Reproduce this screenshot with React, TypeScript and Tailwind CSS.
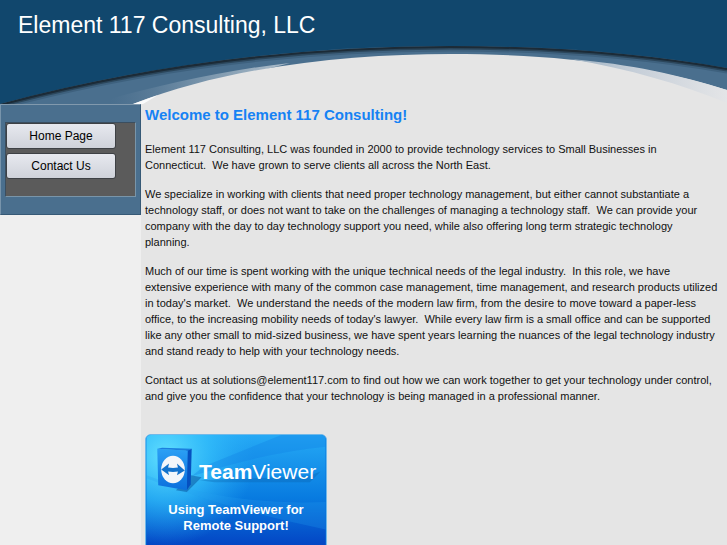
import React from 'react';

const navItems = [
  { label: 'Home Page', href: '#home' },
  { label: 'Contact Us', href: '#contact' },
];

const paragraphs = [
  `Element 117 Consulting, LLC was founded in 2000 to provide technology services to Small Businesses in
Connecticut.\u00a0 We have grown to serve clients all across the North East.`,
  `We specialize in working with clients that need proper technology management, but either cannot substantiate a
technology staff, or does not want to take on the challenges of managing a technology staff.\u00a0 We can provide your
company with the day to day technology support you need, while also offering long term strategic technology
planning.`,
  `Much of our time is spent working with the unique technical needs of the legal industry.\u00a0 In this role, we have
extensive experience with many of the common case management, time management, and research products utilized
in today's market.\u00a0 We understand the needs of the modern law firm, from the desire to move toward a paper-less
office, to the increasing mobility needs of today's lawyer.\u00a0 While every law firm is a small office and can be supported
like any other small to mid-sized business, we have spent years learning the nuances of the legal technology industry
and stand ready to help with your technology needs.`,
  `Contact us at solutions@element117.com to find out how we can work together to get your technology under control,
and give you the confidence that your technology is being managed in a professional manner.`,
];

function Swoosh() {
  return (
    <svg
      className="absolute inset-0 h-full w-full"
      viewBox="0 0 727 104"
      preserveAspectRatio="none"
      aria-hidden="true"
    >
      <defs>
        <linearGradient id="left-glow" x1="110" y1="0" x2="280" y2="0" gradientUnits="userSpaceOnUse">
          <stop offset="0" stopColor="#5f7f9b" stopOpacity="0" />
          <stop offset="0.5" stopColor="#7390a8" />
          <stop offset="1" stopColor="#a9bac8" />
        </linearGradient>
        <linearGradient id="right-glow" x1="570" y1="0" x2="727" y2="0" gradientUnits="userSpaceOnUse">
          <stop offset="0" stopColor="#9db1c2" />
          <stop offset="0.4" stopColor="#c5ced8" />
          <stop offset="1" stopColor="#e4e5e7" />
        </linearGradient>
      </defs>
      <path d="M0 104C150 64 300 46 450 46C550 46 640 53 727 68V104Z" fill="#4a6f8e" />
      <path d="M0 108C150 68 300 50 450 50C550 50 640 57 727 72" fill="none" stroke="#3e617e" strokeWidth="3" />
      <path d="M0 106C150 66 300 48 450 48C550 48 640 55 727 70" fill="none" stroke="#2b465b" strokeWidth="3" />
      <path d="M0 105C150 65 300 47 450 47C550 47 640 54 727 69" fill="none" stroke="#1c2b37" strokeWidth="2" />
      <path d="M110 99C160 85 225 70 290 63L240 76L133 104H110Z" fill="url(#left-glow)" />
      <path d="M133 104C230 66 350 54 450 54C560 54 650 66 727 90V104Z" fill="#e5e5e5" />
      <path d="M570 59C630 64 680 75 727 90V103C680 84 630 69 570 59Z" fill="url(#right-glow)" />
      <path d="M133 104L158 95L143 104Z" fill="#fafbfc" />
    </svg>
  );
}

function TeamViewerBadge() {
  return (
    <a
      href="#support"
      className="relative block h-[128px] w-[182px] overflow-hidden rounded-md border border-[#71b9e9] bg-[#0870dc]"
    >
      <svg className="absolute inset-0 h-full w-full" viewBox="0 0 182 128" aria-hidden="true">
        <defs>
          <linearGradient id="badge-base" x1="0" y1="0" x2="0" y2="1">
            <stop offset="0" stopColor="#25a9f5" />
            <stop offset="0.5" stopColor="#087be0" />
            <stop offset="0.85" stopColor="#0449c6" />
            <stop offset="1" stopColor="#033eb9" />
          </linearGradient>
          <radialGradient id="badge-glow" cx="20" cy="22" r="90" gradientUnits="userSpaceOnUse">
            <stop offset="0" stopColor="#64e1ff" />
            <stop offset="0.5" stopColor="#37c4fc" stopOpacity="0.65" />
            <stop offset="1" stopColor="#2ab0f7" stopOpacity="0" />
          </radialGradient>
          <linearGradient id="cube-face" x1="0" y1="0" x2="0" y2="1">
            <stop offset="0" stopColor="#2ba0f5" />
            <stop offset="1" stopColor="#0b6fdc" />
          </linearGradient>
        </defs>
        <path d="M0 0H182V128H0Z" fill="url(#badge-base)" />
        <path d="M0 0H182V128H0Z" fill="url(#badge-glow)" />
        <path d="M58 32L137 0H182V12Q120 18 46 42Z" fill="#1182e5" opacity="0.35" />
        <path d="M0 41Q80 72 182 68V96Q80 75 0 44Z" fill="#25a1f1" opacity="0.25" />
        <path d="M30 56L45 41L56 43L41 58Z" fill="#075097" opacity="0.5" />
        <path d="M40 16L46 14L45 50L41 56Z" fill="#0550c0" />
        <path d="M11 14L42 16L41 56L12 51Z" fill="url(#cube-face)" />
        <path d="M11 14L16 13L46 14L42 16Z" fill="#1b7fdf" />
        <ellipse cx="27" cy="35" rx="12" ry="14" fill="#f2f6fa" />
        <path d="M15 35L23 29L22 33Q27 34 32 33L31 29L39 36L31 41L32 37Q27 38 22 37L23 41Z" fill="#1272cc" />
        <path d="M54 46L164 42L177 37L166 48H69Z" fill="#07579f" opacity="0.28" />
      </svg>
      <span className="absolute top-[22px] left-[53px] text-[21px] leading-[30px] text-white">
        <b>Team</b>Viewer
      </span>
      <span className="absolute inset-x-0 top-[67px] text-center text-[13px] leading-4 font-bold text-white">
        Using TeamViewer for
        <br />
        Remote Support!
      </span>
    </a>
  );
}

export default function App() {
  return (
    <div className="flex h-screen flex-col overflow-hidden bg-[#e5e5e5] font-['Liberation_Sans',Arial,sans-serif] text-[#111]">
      <header className="relative h-[104px] shrink-0 bg-[#11476d]">
        <Swoosh />
        <h1 className="relative px-[18px] pt-[10px] text-[23px] leading-[30px] text-white">
          Element 117 Consulting, LLC
        </h1>
      </header>

      <div className="flex min-h-0 flex-1">
        <aside className="w-[141px] shrink-0 bg-[#efefef]">
          <div className="border border-t-[#8199ad] border-r-[#365976] border-b-[#365976] border-l-[#7894ab] bg-[#4a6f8e] px-[4px] py-[17px]">
            <nav className="flex h-[75px] flex-col gap-[4px] border border-t-[#3b4e5f] border-r-[#7995a9] border-b-[#7995a9] border-l-[#3b4e5f] bg-[#5b5b5b]">
              {navItems.map((item) => (
                <a
                  key={item.label}
                  href={item.href}
                  className="block h-[26px] w-[110px] rounded-[3px] border border-[#3e4145] bg-linear-to-b from-[#e7e9ef] to-[#cfd2da] text-center text-xs leading-[24px] text-black"
                >
                  {item.label}
                </a>
              ))}
            </nav>
          </div>
        </aside>

        <main className="min-w-0 flex-1 pl-[4px]">
          <h2 className="pt-px text-[15px] leading-5 font-bold text-[#1682f4]">
            Welcome to Element 117 Consulting!
          </h2>
          <div className="flex flex-col gap-[13px] pt-4 text-[11px] leading-4 whitespace-pre-line">
            {paragraphs.map((text) => (
              <p key={text}>{text}</p>
            ))}
          </div>
          <div className="pt-[30px]">
            <TeamViewerBadge />
          </div>
        </main>
      </div>
    </div>
  );
}
